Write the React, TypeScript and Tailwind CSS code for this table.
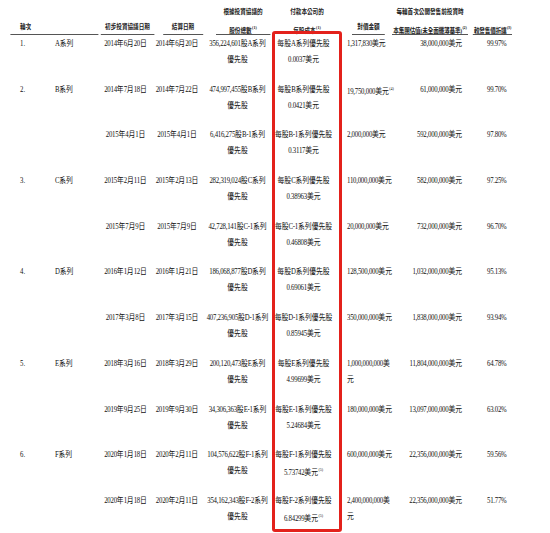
import React from "react";

type Row = {
  no?: string;
  series?: string;
  d1: string;
  d2: string;
  shares: string;
  cost: string;
  costSup?: string;
  amount: string[];
  amountSup?: string;
  valuation: string;
  discount: string;
};

const rows: Row[] = [
  { no: "1.", series: "A系列", d1: "2014年6月20日", d2: "2014年6月20日", shares: "356,224,601股A系列", cost: "0.0037美元", amount: ["1,317,830美元"], valuation: "38,000,000美元", discount: "99.97%" },
  { no: "2.", series: "B系列", d1: "2014年7月18日", d2: "2014年7月22日", shares: "474,997,455股B系列", cost: "0.0421美元", amount: ["19,750,000美元"], amountSup: "(4)", valuation: "61,000,000美元", discount: "99.70%" },
  { d1: "2015年4月1日", d2: "2015年4月1日", shares: "6,416,275股B-1系列", cost: "0.3117美元", amount: ["2,000,000美元"], valuation: "592,000,000美元", discount: "97.80%" },
  { no: "3.", series: "C系列", d1: "2015年2月11日", d2: "2015年2月13日", shares: "282,319,024股C系列", cost: "0.38963美元", amount: ["110,000,000美元"], valuation: "582,000,000美元", discount: "97.25%" },
  { d1: "2015年7月9日", d2: "2015年7月9日", shares: "42,728,141股C-1系列", cost: "0.46808美元", amount: ["20,000,000美元"], valuation: "732,000,000美元", discount: "96.70%" },
  { no: "4.", series: "D系列", d1: "2016年1月12日", d2: "2016年1月21日", shares: "186,068,877股D系列", cost: "0.69061美元", amount: ["128,500,000美元"], valuation: "1,032,000,000美元", discount: "95.13%" },
  { d1: "2017年3月8日", d2: "2017年3月15日", shares: "407,236,905股D-1系列", cost: "0.85945美元", amount: ["350,000,000美元"], valuation: "1,838,000,000美元", discount: "93.94%" },
  { no: "5.", series: "E系列", d1: "2018年3月16日", d2: "2018年3月29日", shares: "200,120,473股E系列", cost: "4.99699美元", amount: ["1,000,000,000美", "元"], valuation: "11,804,000,000美元", discount: "64.78%" },
  { d1: "2019年9月25日", d2: "2019年9月30日", shares: "34,306,363股E-1系列", cost: "5.24684美元", amount: ["180,000,000美元"], valuation: "13,097,000,000美元", discount: "63.02%" },
  { no: "6.", series: "F系列", d1: "2020年1月18日", d2: "2020年2月11日", shares: "104,576,622股F-1系列", cost: "5.73742美元", costSup: "(5)", amount: ["600,000,000美元"], valuation: "22,356,000,000美元", discount: "59.56%" },
  { d1: "2020年1月18日", d2: "2020年2月11日", shares: "354,162,343股F-2系列", cost: "6.84299美元", costSup: "(5)", amount: ["2,400,000,000美", "元"], valuation: "22,356,000,000美元", discount: "51.77%" },
];

const seriesLabel = (shares: string) => {
  const m = shares.match(/股(.+)系列/);
  return m ? m[1] : "";
};

// condense Latin digits a little, keep CJK at natural width
function T({ s }: { s: string }) {
  const parts = s.split(/([0-9A-Z,.\-%]+)/).filter((p) => p !== "");
  return (
    <>
      {parts.map((p, i) =>
        /^[0-9A-Z,.\-%]+$/.test(p) ? (
          <span key={i} className="tracking-[-0.3px]">{p}</span>
        ) : (
          <span key={i}>{p}</span>
        )
      )}
    </>
  );
}

// column widths are pre-scale (the table is condensed horizontally to 0.8)
const GRID =
  "grid grid-cols-[50px_62.5px_68.75px_61.25px_86.25px_85px_63.75px_97.5px_56.25px]";

function Sup({ children }: { children: React.ReactNode }) {
  return <span className="text-[5px] align-[4px] ml-[0.5px]">{children}</span>;
}

export default function App() {
  return (
    <div
      className="relative w-[550px] h-[533px] overflow-hidden bg-white text-[#111111]"
      style={{ fontFamily: "'Liberation Serif', 'Noto Sans CJK TC', serif" }}
    >
      <div className="w-[687.5px] pl-[12.5px] origin-top-left scale-x-[0.8]">
        {/* Header */}
        <div className={`${GRID} h-[35px] pt-[3px] text-[7px] font-bold leading-[15px] text-[#222222]`}>
          <div className="col-span-2 flex flex-col justify-end mr-[2.5px]">
            <div className="border-b-[1.5px] border-[#555] h-[15px] pl-[12.5px]">輪次</div>
          </div>
          <div className="flex flex-col justify-end mx-[1.25px]">
            <div className="border-b-[1.5px] border-[#555] h-[15px] text-center">初步投資協議日期</div>
          </div>
          <div className="flex flex-col justify-end ml-[10px] mr-[1.25px]">
            <div className="border-b-[1.5px] border-[#555] h-[15px] text-center">結算日期</div>
          </div>
          <div className="flex flex-col justify-end ml-[15px] mr-[3.75px] text-center">
            <div>根據投資協議的</div>
            <div className="border-b-[1.5px] border-[#555] h-[15px]">股份總數<Sup>(1)</Sup></div>
          </div>
          <div className="flex flex-col justify-end mx-[5px] text-center">
            <div>付款本公司的</div>
            <div className="h-[15px]">每股成本<Sup>(1)</Sup></div>
          </div>
          <div className="flex flex-col justify-end ml-[13.75px] mr-[8.75px]">
            <div className="border-b-[1.5px] border-[#555] h-[15px] text-center">對價金額</div>
          </div>
          <div className="flex flex-col justify-end mr-[2.5px] text-center whitespace-nowrap">
            <div>每輪首次公開發售前投資時</div>
            <div className="border-b-[1.5px] border-[#555] h-[15px] tracking-[-0.2px]">本集團估值(未全面攤薄基準)<Sup>(2)</Sup></div>
          </div>
          <div className="flex flex-col justify-end mx-[3.75px]">
            <div className="border-b-[1.5px] border-[#555] h-[15px] text-center whitespace-nowrap tracking-[-0.2px]">較發售價折讓<Sup>(3)</Sup></div>
          </div>
        </div>

        {/* Body */}
        <div className="text-[8.5px] leading-[16px]">
          {rows.map((r, i) => (
            <div key={i} className={`${GRID} h-[45.7px] items-start whitespace-nowrap`}>
              <div className="pl-[12.5px]">{r.no ?? ""}</div>
              <div className="pl-[6.25px]">{r.series ? <T s={r.series} /> : ""}</div>
              <div className="text-center pr-[5px]"><T s={r.d1} /></div>
              <div className="text-center pr-[6.25px]"><T s={r.d2} /></div>
              <div className="text-center pr-[2.5px]">
                <div><T s={r.shares} /></div>
                <div>優先股</div>
              </div>
              <div className="text-center pr-[8.75px]">
                <div><T s={`每股${seriesLabel(r.shares)}系列優先股`} /></div>
                <div>
                  <T s={r.cost} />
                  {r.costSup && <Sup>{r.costSup}</Sup>}
                </div>
              </div>
              <div className="pl-[7.5px]">
                {r.amount.map((a, k) => (
                  <div key={k}>
                    <T s={a} />
                    {k === 0 && r.amountSup && <Sup>{r.amountSup}</Sup>}
                  </div>
                ))}
              </div>
              <div className="text-right pr-[10px]"><T s={r.valuation} /></div>
              <div className="pl-[21.25px]"><T s={r.discount} /></div>
            </div>
          ))}
        </div>
      </div>

      {/* red highlight annotation */}
      <div className="absolute left-[272px] top-[31px] w-[70px] h-[501px] border-[3px] border-[#e3211b] rounded-[3px] pointer-events-none" />
    </div>
  );
}
